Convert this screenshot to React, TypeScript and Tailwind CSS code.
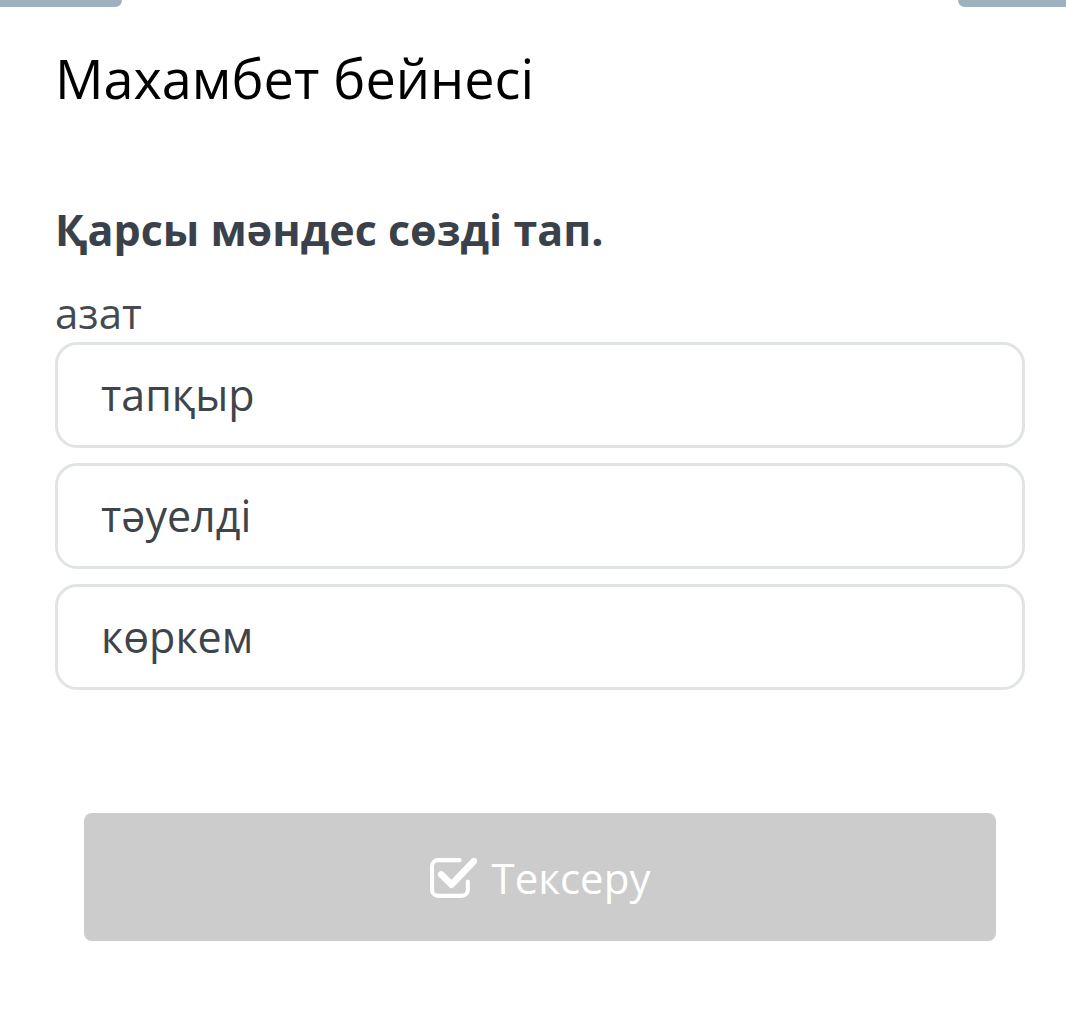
const options = ['тапқыр', 'тәуелді', 'көркем']

function CheckSquareIcon() {
  return (
    <svg width="47" height="41" viewBox="0 0 46 40" fill="none">
      <path
        d="M29 3H8a6 6 0 0 0-6 6v23a6 6 0 0 0 6 6h23a6 6 0 0 0 6-6v-8"
        stroke="white"
        strokeWidth="4"
        strokeLinecap="round"
      />
      <path
        d="M11 17l10 10L43 4"
        stroke="white"
        strokeWidth="6.5"
        strokeLinecap="round"
        strokeLinejoin="round"
      />
    </svg>
  )
}

export default function App() {
  return (
    <div
      className="min-h-[1012px] w-[1066px] bg-white"
      style={{ fontFamily: '"Open Sans", "Noto Sans", sans-serif' }}
    >
      {/* 上方殘留的頁籤 */}
      <div className="flex justify-between">
        <div className="h-[7px] w-[122px] rounded-br-[10px] bg-[#9db1bf]" />
        <div className="h-[7px] w-[108px] rounded-bl-[10px] bg-[#9db1bf]" />
      </div>

      <div className="pl-[55px] pr-[41px]">
        <h1 className="mt-[39px] text-[54px] leading-[64px] text-black">Махамбет бейнесі</h1>

        <h2 className="mt-[93px] text-[43px] font-bold leading-[54px] text-[#3a414b]">
          Қарсы мәндес сөзді тап.
        </h2>
        <p className="mt-[33px] text-[42px] leading-[46px] text-[#454a50]">азат</p>

        <div className="mt-[6px] flex flex-col gap-[15px]">
          {options.map((o) => (
            <div
              key={o}
              className="flex h-[106px] items-center rounded-[22px] border-[3px] border-[#e0e4e4] pl-[43px] text-[43px] text-[#3f4449]"
            >
              {o}
            </div>
          ))}
        </div>
      </div>

      <div className="mt-[123px] pl-[84px] pr-[70px]">
        <button
          type="button"
          className="flex h-[128px] w-full items-center justify-center gap-[15px] rounded-[8px] bg-[#cccccc] text-[42px] text-white"
        >
          <CheckSquareIcon />
          <span>Тексеру</span>
        </button>
      </div>
    </div>
  )
}
